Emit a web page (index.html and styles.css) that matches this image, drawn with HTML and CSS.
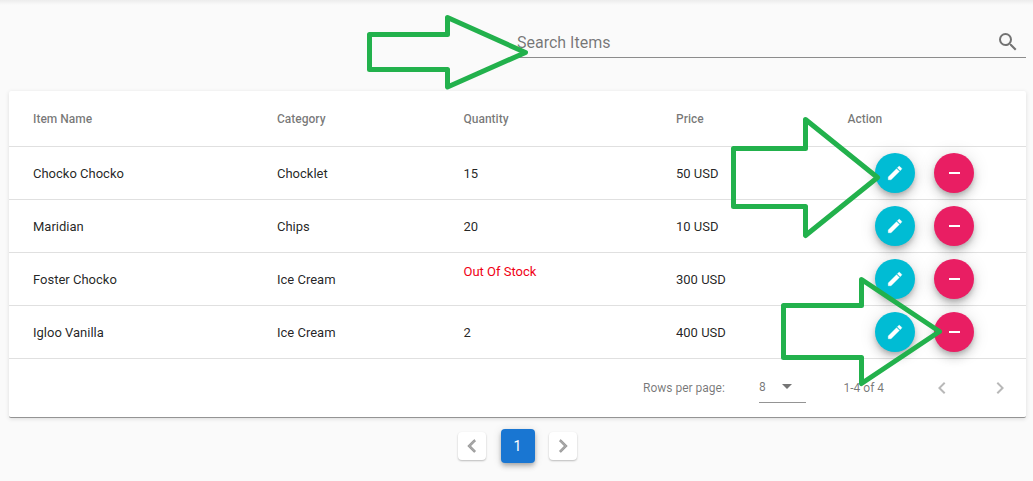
FILE: index.html
```html
<!DOCTYPE html>
<html lang="en">
<head>
<meta charset="utf-8">
<title>Items</title>
<link rel="stylesheet" href="styles.css">
</head>
<body>
<svg class="symbols" aria-hidden="true">
  <symbol id="edit" viewBox="0 0 24 24"><path d="M3 17.25V21h3.75L17.81 9.94l-3.75-3.75L3 17.25zM20.71 7.04a1 1 0 0 0 0-1.41l-2.34-2.34a1 1 0 0 0-1.41 0l-1.83 1.83 3.75 3.75 1.83-1.83z"/></symbol>
  <symbol id="minus" viewBox="0 0 20 20"><path d="M5 9h11v2H5z"/></symbol>
  <symbol id="left" viewBox="0 0 24 24"><path d="M15.41 7.41 14 6l-6 6 6 6 1.41-1.41L10.83 12z"/></symbol>
  <symbol id="right" viewBox="0 0 24 24"><path d="M10 6 8.59 7.41 13.17 12l-4.58 4.59L10 18l6-6z"/></symbol>
</svg>
<main class="page">
  <div class="search">
    <span class="search-label">Search Items</span>
    <svg class="search-icon" viewBox="0 0 24 24"><path d="M15.5 14h-.79l-.28-.27A6.47 6.47 0 0 0 16 9.5 6.5 6.5 0 1 0 9.5 16c1.61 0 3.09-.59 4.23-1.57l.27.28v.79l5 4.99L20.49 19l-4.99-5zm-6 0C7.01 14 5 11.99 5 9.5S7.01 5 9.5 5 14 7.01 14 9.5 11.99 14 9.5 14z"/></svg>
  </div>
  <section class="card">
    <div class="row head"><span>Item Name</span><span>Category</span><span>Quantity</span><span>Price</span><span>Action</span></div>
    <div class="row"><span>Chocko Chocko</span><span>Chocklet</span><span>15</span><span>50 USD</span><div class="actions"><button class="fab edit"><svg><use href="#edit"/></svg></button><button class="fab remove"><svg><use href="#minus"/></svg></button></div></div>
    <div class="row"><span>Maridian</span><span>Chips</span><span>20</span><span>10 USD</span><div class="actions"><button class="fab edit"><svg><use href="#edit"/></svg></button><button class="fab remove"><svg><use href="#minus"/></svg></button></div></div>
    <div class="row"><span>Foster Chocko</span><span>Ice Cream</span><span class="out">Out Of Stock</span><span>300 USD</span><div class="actions"><button class="fab edit"><svg><use href="#edit"/></svg></button><button class="fab remove"><svg><use href="#minus"/></svg></button></div></div>
    <div class="row"><span>Igloo Vanilla</span><span>Ice Cream</span><span>2</span><span>400 USD</span><div class="actions"><button class="fab edit"><svg><use href="#edit"/></svg></button><button class="fab remove"><svg><use href="#minus"/></svg></button></div></div>
    <footer class="foot">
      <span class="per-page">Rows per page:</span>
      <div class="select"><span>8</span><i class="caret"></i></div>
      <span class="range">1-4 of 4</span>
      <svg class="nav"><use href="#left"/></svg>
      <svg class="nav"><use href="#right"/></svg>
    </footer>
  </section>
  <nav class="pager">
    <button class="page-nav"><svg><use href="#left"/></svg></button>
    <button class="page-current">1</button>
    <button class="page-nav"><svg><use href="#right"/></svg></button>
  </nav>
</main>
<svg class="arrows" viewBox="0 0 1033 481">
  <path d="M369.5 34.5H447.5V17.5L525.5 52.5L447.5 87V69.5H369.5Z"/>
  <path d="M733.5 148.5H805.5V119.5L877.5 177.5L805.5 235.5V206.5H733.5Z"/>
  <path d="M783.5 305.5H861.5V279.5L939.5 331.5L861.5 383.5V357.5H783.5Z"/>
</svg>
</body>
</html>
```
FILE: styles.css
```css
* { box-sizing: border-box; }
body {
  margin: 0;
  height: 481px;
  overflow: hidden;
  background: linear-gradient(#ececec, #fafafa 5px);
  font-family: Roboto, sans-serif;
  color: rgba(0, 0, 0, .87);
}
.symbols { display: none; }
svg { fill: currentColor; }
button { border: 0; padding: 0; font: inherit; }
.page { display: flex; flex-direction: column; padding: 26px 7px 0 9px; }
.search {
  display: flex;
  align-items: center;
  justify-content: space-between;
  align-self: flex-end;
  width: 509px;
  height: 32px;
  padding-right: 6px;
  border-bottom: 1px solid #8c8c8c;
  color: rgba(0, 0, 0, .54);
}
.search-label { font-size: 16px; line-height: 20px; padding-top: 3px; }
.search-icon { width: 24px; height: 24px; }
.card {
  height: 327px;
  margin-top: 33px;
  background: #fff;
  border-bottom: 1px solid #949494;
  border-radius: 2px;
  box-shadow: 0 1px 4px rgba(0, 0, 0, .12);
}
.row {
  display: grid;
  grid-template-columns: 244px 186.5px 212.5px 171.5px 1fr;
  align-items: center;
  height: 53px;
  padding-left: 24px;
  border-bottom: 1px solid #e0e0e0;
  font-size: 13px;
}
.head { height: 56px; font-size: 12px; font-weight: 500; color: rgba(0, 0, 0, .54); }
.out { color: #f00015; padding-bottom: 16px; }
.actions { display: flex; gap: 19px; padding-left: 27.5px; }
.fab {
  display: flex;
  align-items: center;
  justify-content: center;
  width: 40px;
  height: 40px;
  border-radius: 50%;
  color: #fff;
  box-shadow: 0 3px 5px -1px rgba(0, 0, 0, .2), 0 6px 10px rgba(0, 0, 0, .14), 0 1px 18px rgba(0, 0, 0, .12);
}
.edit { background: #00bcd4; }
.edit svg { width: 18px; height: 18px; stroke: currentColor; stroke-width: .5; }
.remove { background: #e91e63; }
.remove svg { width: 20px; height: 20px; }
.foot {
  display: flex;
  align-items: center;
  height: 58px;
  padding-left: 634px;
  font-size: 12px;
  color: rgba(0, 0, 0, .54);
}
.per-page { width: 116px; }
.select {
  display: flex;
  align-items: center;
  gap: 16.5px;
  width: 47px;
  height: 31px;
  margin-bottom: 1px;
  padding-bottom: 1px;
  border-bottom: 1px solid #949494;
}
.caret { border: 5px solid transparent; border-top-color: #757575; border-bottom: 0; }
.range { width: 86.5px; margin-left: 37.5px; }
.nav { width: 24px; height: 24px; color: rgba(0, 0, 0, .28); }
.nav + .nav { margin-left: 34px; }
.pager { display: flex; align-items: center; gap: 14.5px; padding: 11px 0 0 449px; }
.page-nav {
  display: flex;
  align-items: center;
  justify-content: center;
  width: 28px;
  height: 28px;
  background: #fff;
  border-radius: 4px;
  color: rgba(0, 0, 0, .34);
  box-shadow: 0 1px 2px rgba(0, 0, 0, .26);
}
.page-nav svg { width: 26px; height: 26px; flex: none; stroke: currentColor; stroke-width: .6; }
.page-current {
  width: 34px;
  height: 34px;
  border-radius: 4px;
  background: #1976d2;
  color: #fff;
  font-size: 14px;
  box-shadow: 0 2px 4px -1px rgba(0, 0, 0, .2), 0 4px 5px rgba(0, 0, 0, .14), 0 1px 10px rgba(0, 0, 0, .12);
}
.arrows {
  position: absolute;
  top: 0;
  left: 0;
  width: 1033px;
  height: 481px;
  pointer-events: none;
  fill: none;
  stroke: #22b14c;
  stroke-width: 5;
  stroke-linejoin: round;
}
```
